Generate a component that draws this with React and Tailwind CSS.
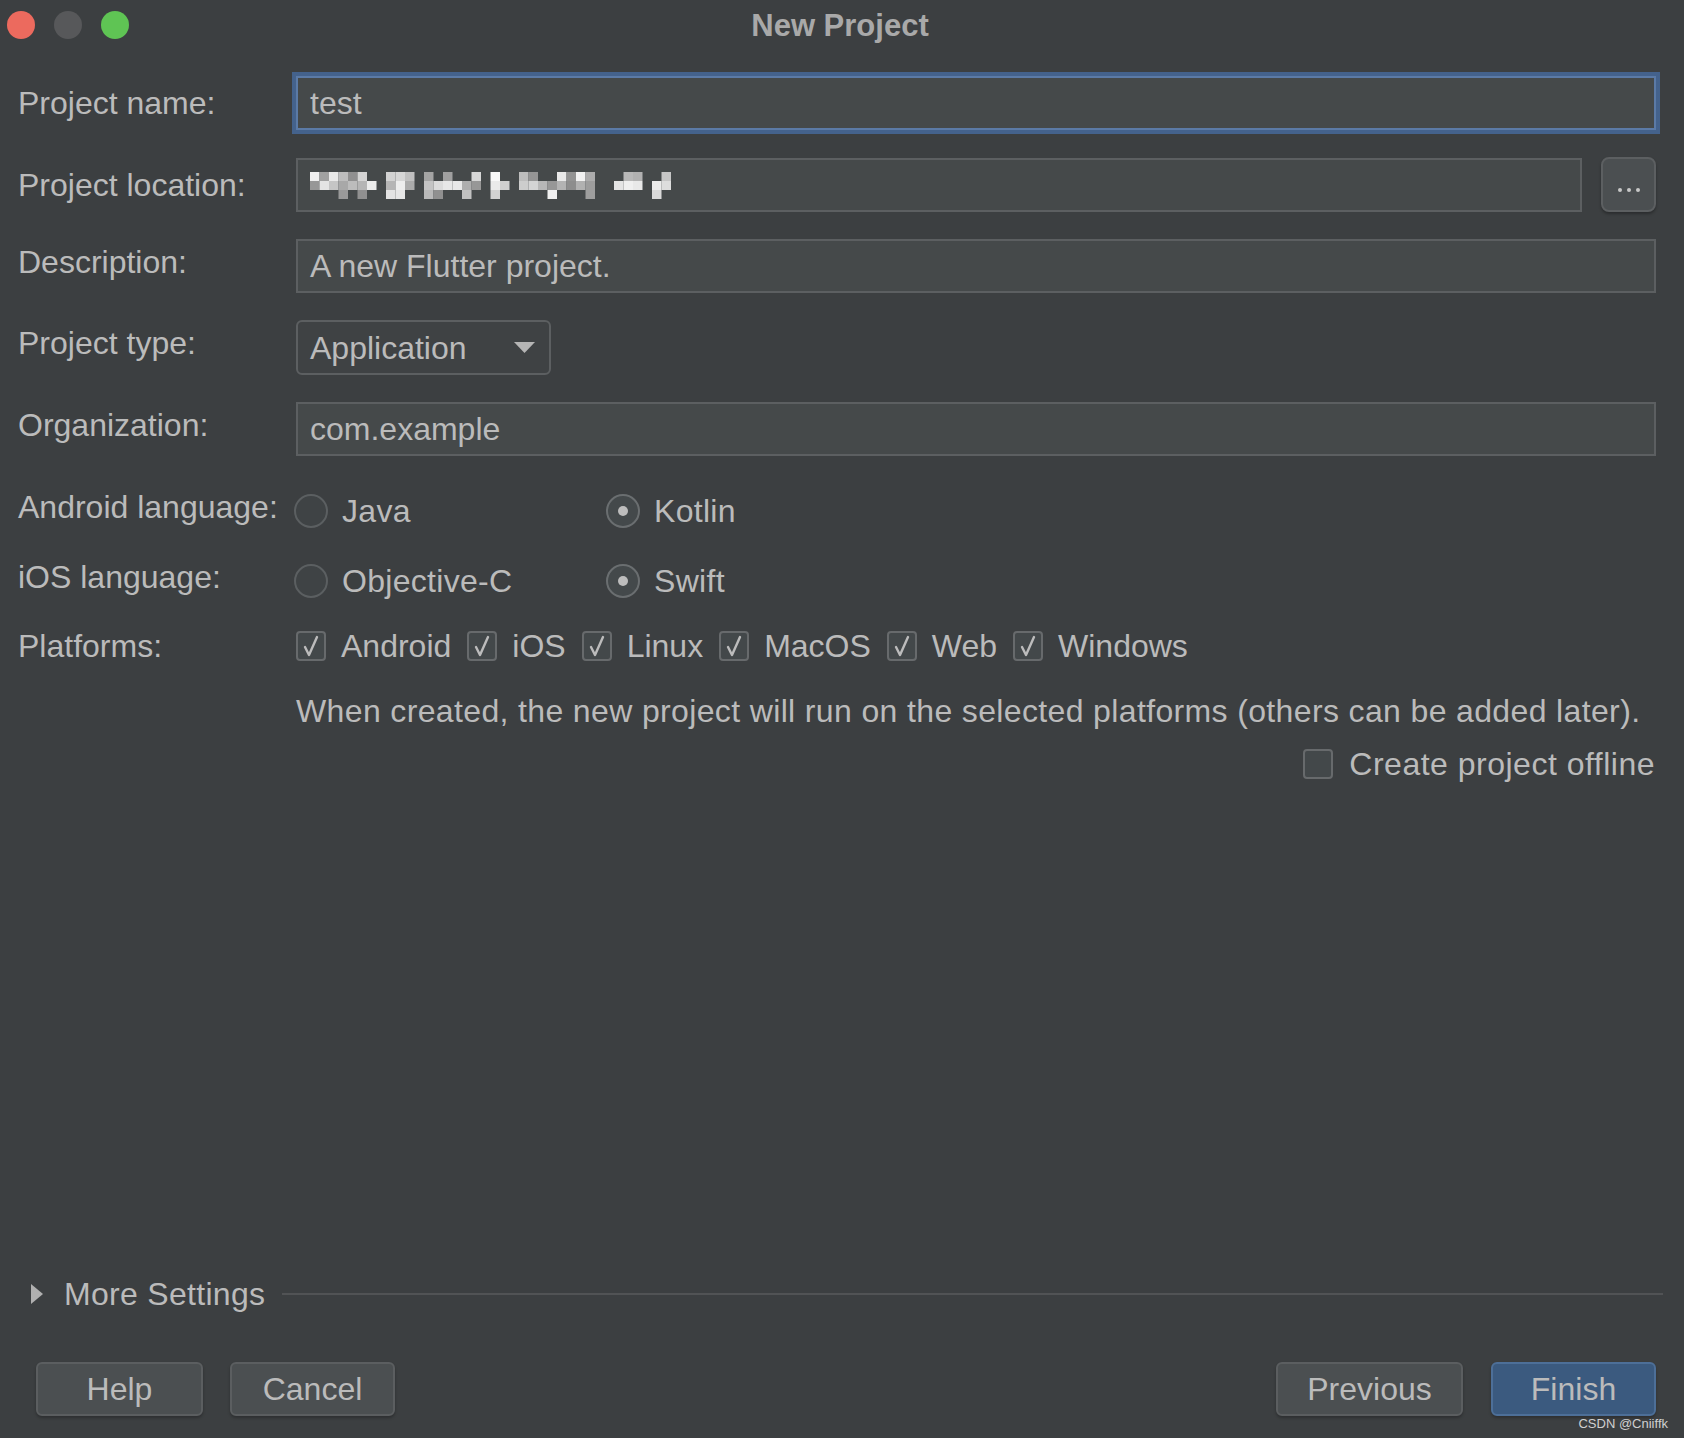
import React from 'react';

// mosaic that stands in for the blurred path in "Project location"
const MOSAIC = (() => {
  const groups = [[0, 7], [8, 3], [12, 6], [19, 2], [22, 8], [32, 3], [36, 2]];
  const cells = [];
  let seed = 11;
  const rnd = () => {
    seed = (seed * 9301 + 49297) % 233280;
    return seed / 233280;
  };
  groups.forEach(([start, len]) => {
    for (let i = start; i < start + len; i++) {
      for (let r = 0; r < 3; r++) {
        const v = rnd();
        if (r === 0 && v < 0.35) continue;
        if (r === 2 && v < 0.75) continue;
        const g = Math.round(140 + rnd() * 110);
        cells.push({ x: i * 9.5, y: r * 9, c: `rgb(${g},${g},${g})` });
      }
    }
  });
  return cells;
})();

function Mosaic() {
  return (
    <svg width="372" height="27" viewBox="0 0 372 27" className="mt-[2px]">
      {MOSAIC.map((m, i) => (
        <rect key={i} x={m.x} y={m.y} width="9.5" height="9" fill={m.c} />
      ))}
    </svg>
  );
}

function Checkbox({ checked }) {
  return (
    <div className="w-[30px] h-[30px] shrink-0 rounded-[4px] border-2 border-[#676a6c] bg-[#43484a] flex items-center justify-center">
      {checked && (
        <svg width="22" height="24" viewBox="0 0 22 24">
          <path d="M5 13 L9 21 L17 3" fill="none" stroke="#bcbcbc" strokeWidth="2.4" strokeLinecap="round" strokeLinejoin="round" />
        </svg>
      )}
    </div>
  );
}

function Radio({ checked, label }) {
  return (
    <div className="w-[312px] flex items-center gap-[14px]">
      <div className={`w-[34px] h-[34px] rounded-full border-2 flex items-center justify-center ${checked ? 'border-[#6a6e70] bg-[#44494b]' : 'border-[#5b5f61] bg-[#3f4345]'}`}>
        {checked && <div className="w-[10px] h-[10px] rounded-full bg-[#bdbdbd]" />}
      </div>
      <span className="tracking-[0.3px]">{label}</span>
    </div>
  );
}

function Row({ label, children, className = '', labelClass = '' }) {
  return (
    <div className={`flex items-center pl-[18px] pr-[28px] ${className}`}>
      <div className={`w-[278px] shrink-0 ${labelClass}`}>{label}</div>
      {children}
    </div>
  );
}

const field = 'flex-1 h-[54px] border-2 border-[#5c5f61] bg-[#45494a] flex items-center px-[12px]';
const btn = 'h-[54px] rounded-[6px] border-2 flex items-center justify-center shadow-[0_2px_3px_rgba(0,0,0,0.25)]';

export default function App() {
  const platforms = ['Android', 'iOS', 'Linux', 'MacOS', 'Web', 'Windows'];

  return (
    <div className="relative w-[1684px] h-[1438px] bg-[#3c3f41] flex flex-col text-[32px] text-[#bbbbbb] font-['Liberation_Sans',Arial,sans-serif] leading-none">
      {/* Title bar */}
      <div className="h-[50px] grid grid-cols-[1fr_auto_1fr] items-center">
        <div className="flex items-center gap-[19px] pl-[7px]">
          <div className="w-[28px] h-[28px] rounded-full bg-[#ec6a5e]" />
          <div className="w-[28px] h-[28px] rounded-full bg-[#57585a]" />
          <div className="w-[28px] h-[28px] rounded-full bg-[#5fc454]" />
        </div>
        <div className="text-[31px] font-bold text-[#a9a9a9] pr-[4px]">New Project</div>
        <div />
      </div>

      {/* Form */}
      <div className="pt-[26px] flex flex-col">
        <Row label="Project name:">
          <div className="flex-1 h-[54px] border-2 border-[#5b7aa6] ring-[4px] ring-[#44628c] bg-[#45494a] flex items-center px-[12px]">
            test
          </div>
        </Row>

        <Row label="Project location:" className="mt-[27px]">
          <div className={field}>
            <Mosaic />
          </div>
          <div className="ml-[19px] w-[55px] h-[55px] rounded-[8px] border-2 border-[#5c5f61] bg-[#4b4f51] shadow-[0_2px_3px_rgba(0,0,0,0.3)] flex items-center justify-center gap-[5px] pt-[10px]">
            <span className="w-[4px] h-[4px] rounded-full bg-[#c8c8c8]" />
            <span className="w-[4px] h-[4px] rounded-full bg-[#c8c8c8]" />
            <span className="w-[4px] h-[4px] rounded-full bg-[#c8c8c8]" />
          </div>
        </Row>

        <Row label="Description:" className="mt-[27px]" labelClass="pb-[9px]">
          <div className={field}>A new Flutter project.</div>
        </Row>

        <Row label="Project type:" className="mt-[27px]" labelClass="pb-[9px]">
          <div className="w-[255px] h-[55px] rounded-[6px] border-2 border-[#5c5f61] bg-[#3f4244] flex items-center justify-between pl-[12px] pr-[14px]">
            <span>Application</span>
            <svg width="21" height="11" viewBox="0 0 21 11">
              <path d="M0 0 H21 L10.5 11 Z" fill="#b5b5b5" />
            </svg>
          </div>
        </Row>

        <Row label="Organization:" className="mt-[27px]" labelClass="pb-[9px]">
          <div className={field}>com.example</div>
        </Row>

        <Row label="Android language:" className="mt-[35px] h-[40px]" labelClass="pb-[9px]">
          <div className="flex -ml-[2px]">
            <Radio label="Java" />
            <Radio label="Kotlin" checked />
          </div>
        </Row>

        <Row label="iOS language:" className="mt-[30px] h-[40px]" labelClass="pb-[9px]">
          <div className="flex -ml-[2px]">
            <Radio label="Objective-C" />
            <Radio label="Swift" checked />
          </div>
        </Row>

        <Row label="Platforms:" className="mt-[25px] h-[40px]">
          <div className="flex items-center gap-[16px]">
            {platforms.map(p => (
              <div key={p} className="flex items-center gap-[15px]">
                <Checkbox checked />
                <span>{p}</span>
              </div>
            ))}
          </div>
        </Row>

        <Row label="" className="mt-[25px] h-[40px]">
          <span className="tracking-[0.36px]">When created, the new project will run on the selected platforms (others can be added later).</span>
        </Row>

        <div className="mt-[13px] h-[40px] flex items-center justify-end gap-[16px] pr-[29px]">
          <Checkbox />
          <span className="tracking-[0.5px]">Create project offline</span>
        </div>
      </div>

      <div className="flex-1" />

      {/* More settings */}
      <div className="h-[40px] flex items-center pl-[31px] pr-[21px]">
        <svg width="12" height="20" viewBox="0 0 12 20">
          <path d="M0 0 L12 10 L0 20 Z" fill="#b0b0b0" />
        </svg>
        <span className="ml-[21px] tracking-[0.3px]">More Settings</span>
        <div className="flex-1 ml-[17px] h-[2px] bg-[#515355]" />
      </div>

      {/* Buttons */}
      <div className="mt-[48px] mb-[22px] flex items-center pl-[36px] pr-[28px]">
        <div className={`${btn} w-[167px] border-[#5b5e60] bg-[#4b4f51]`}>Help</div>
        <div className={`${btn} ml-[27px] w-[165px] border-[#5b5e60] bg-[#4b4f51]`}>Cancel</div>
        <div className="flex-1" />
        <div className={`${btn} w-[187px] border-[#5b5e60] bg-[#4b4f51]`}>Previous</div>
        <div className={`${btn} ml-[28px] w-[165px] border-[#4d6f98] bg-[#3b5a7f]`}>Finish</div>
      </div>

      <div className="absolute right-[16px] bottom-[8px] text-[13px] text-[#d0d0d0]">CSDN @Cniiffk</div>
    </div>
  );
}
